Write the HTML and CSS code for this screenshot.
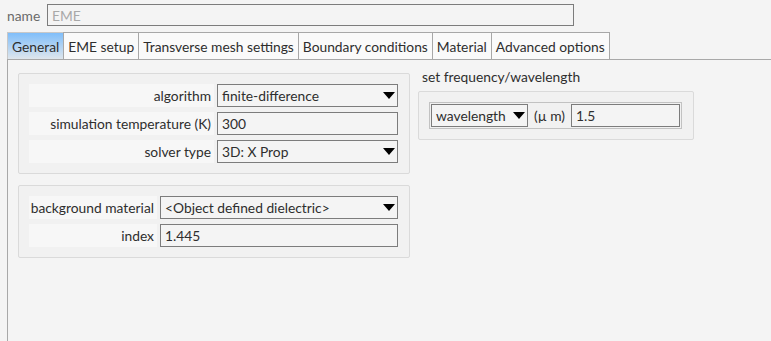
FILE: index.html
```html
<!DOCTYPE html>
<html>
<head>
   <title>EME</title>
   <meta name="viewport" content="width=device-width, initial-scale=1">
   <link rel="stylesheet" href="styles.css">
</head>
<body>
   <div class="name-row">
      <span class="name-label">name</span>
      <input class="field name-field" type="text" value="EME" disabled>
   </div>

   <div class="tabs">
      <div class="tab active">General</div>
      <div class="tab">EME setup</div>
      <div class="tab">Transverse mesh settings</div>
      <div class="tab">Boundary conditions</div>
      <div class="tab">Material</div>
      <div class="tab">Advanced options</div>
   </div>

   <div class="pane">
      <div class="column left">
         <div class="group">
            <div class="form-grid wide">
               <div class="label">algorithm</div>
               <div class="field select">finite-difference<span class="arrow"></span></div>
               <div class="label">simulation temperature (K)</div>
               <div class="field">300</div>
               <div class="label">solver type</div>
               <div class="field select">3D: X Prop<span class="arrow"></span></div>
            </div>
         </div>

         <div class="group">
            <div class="form-grid narrow">
               <div class="label">background material</div>
               <div class="field select">&lt;Object defined dielectric&gt;<span class="arrow"></span></div>
               <div class="label">index</div>
               <div class="field">1.445</div>
            </div>
         </div>
      </div>

      <div class="column right">
         <div class="group-title">set frequency/wavelength</div>
         <div class="group small">
            <div class="freq-row">
               <div class="field select unit-select">wavelength<span class="arrow"></span></div>
               <span class="unit">(µ m)</span>
               <div class="field freq-value">1.5</div>
            </div>
         </div>
      </div>
   </div>
</body>
</html>
```

FILE: styles.css
```css
html, body {
   height: 100%;
}
body {
   margin: 0;
   display: flex;
   flex-direction: column;
   background: #f4f4f4;
   font-family: Lato, "Open Sans", sans-serif;
   font-size: 13.8px;
   color: #2e2e2e;
   white-space: nowrap;
   overflow: hidden;
}
.name-row {
   display: flex;
   align-items: center;
   height: 22px;
   margin-top: 4px;
   padding-left: 7px;
}
.name-label {
   color: #6a6a6a;
   width: 40px;
}
.name-field {
   width: 527px;
   height: 22px;
   box-sizing: border-box;
   border: 1px solid #a8a8a8;
   background: #f4f4f4;
   color: #a8a8a8;
   font: inherit;
   padding: 0 3px;
}
.tabs {
   display: flex;
   margin-top: 6px;
   margin-left: 7px;
   height: 27px;
   border-bottom: 1px solid #a8a8a8;
}
.tab {
   display: flex;
   align-items: center;
   padding: 0 4px;
   border: 1px solid #a8a8a8;
   border-bottom: none;
   margin-right: -1px;
   background: #fafafa;
}
.tab.active {
   background: linear-gradient(#80befa, #dfe6ec);
   border-color: #c8c8c8;
}
.pane {
   flex: 1;
   display: flex;
   gap: 8px;
   margin-left: 7px;
   border-left: 1px solid #a8a8a8;
   padding: 13px 10px 0;
}
.column {
   display: flex;
   flex-direction: column;
   gap: 11px;
}
.left {
   width: 392px;
}
.right {
   width: 276px;
   gap: 0;
}
.group {
   border: 1px solid #dadada;
   border-radius: 2px;
   background: #f1f1f1;
   padding: 10px 11px 10px 10px;
}
.group-title {
   height: 21px;
   margin-top: -3px;
   line-height: 14px;
   margin-left: 4px;
}
.form-grid {
   display: grid;
   row-gap: 5px;
   column-gap: 3px;
   grid-auto-rows: 23px;
}
.form-grid.wide {
   grid-template-columns: 185px 1fr;
}
.form-grid.narrow {
   grid-template-columns: 128px 1fr;
}
.label {
   background: #f7f7f7;
   display: flex;
   align-items: center;
   justify-content: flex-end;
   padding-right: 3px;
}
.field {
   display: flex;
   align-items: center;
   border: 1px solid #7c7c7c;
   background: #f4f4f4;
   padding: 0 4px;
   box-sizing: border-box;
   position: relative;
}
.arrow {
   position: absolute;
   right: 2px;
   top: 7px;
   width: 0;
   height: 0;
   border-left: 6px solid transparent;
   border-right: 6px solid transparent;
   border-top: 7px solid #000;
}
.freq-row {
   display: flex;
   align-items: center;
   height: 23px;
   padding: 1px;
   border: 1px solid #c2c2c2;
}
.unit-select {
   width: 97px;
   height: 23px;
   flex-shrink: 0;
}
.unit {
   margin: 0 6px;
   flex-shrink: 0;
}
.freq-value {
   width: 109px;
   height: 23px;
   flex-shrink: 0;
}
```
